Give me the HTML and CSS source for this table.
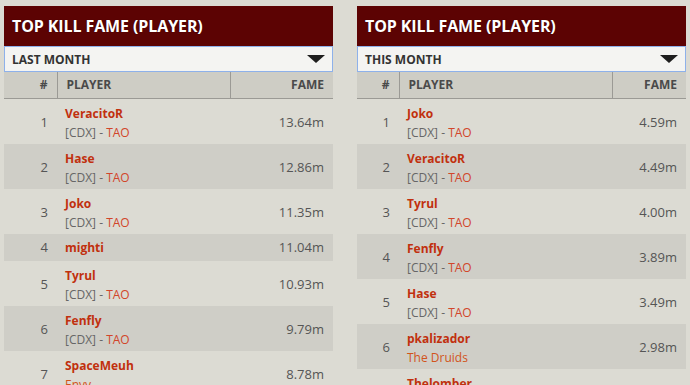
FILE: index.html
```html
<!DOCTYPE html>
<html>
<head>
<meta charset="utf-8">
<link rel="stylesheet" href="styles.css">
</head>
<body>
<div class="page">
  <section class="panel panel-a">
    <h2 class="title">TOP KILL FAME (PLAYER)</h2>
    <div class="select"><span>LAST MONTH</span><span class="caret"></span></div>
    <table class="board">
      <colgroup><col class="c-rank"><col class="c-player"><col class="c-fame"></colgroup>
      <thead><tr><th class="rank">#</th><th class="player">PLAYER</th><th class="fame">FAME</th></tr></thead>
      <tbody>
        <tr><td class="rank">1</td><td class="player"><div class="name">VeracitoR</div><div class="guild">[CDX] - <span class="ally">TAO</span></div></td><td class="fame">13.64m</td></tr>
        <tr class="alt"><td class="rank">2</td><td class="player"><div class="name">Hase</div><div class="guild">[CDX] - <span class="ally">TAO</span></div></td><td class="fame">12.86m</td></tr>
        <tr><td class="rank">3</td><td class="player"><div class="name">Joko</div><div class="guild">[CDX] - <span class="ally">TAO</span></div></td><td class="fame">11.35m</td></tr>
        <tr class="alt single"><td class="rank">4</td><td class="player"><div class="name">mighti</div></td><td class="fame">11.04m</td></tr>
        <tr><td class="rank">5</td><td class="player"><div class="name">Tyrul</div><div class="guild">[CDX] - <span class="ally">TAO</span></div></td><td class="fame">10.93m</td></tr>
        <tr class="alt"><td class="rank">6</td><td class="player"><div class="name">Fenfly</div><div class="guild">[CDX] - <span class="ally">TAO</span></div></td><td class="fame">9.79m</td></tr>
        <tr><td class="rank">7</td><td class="player"><div class="name">SpaceMeuh</div><div class="guild"><span class="gname">Envy</span></div></td><td class="fame">8.78m</td></tr>
      </tbody>
    </table>
  </section>
  <section class="panel panel-b">
    <h2 class="title">TOP KILL FAME (PLAYER)</h2>
    <div class="select"><span>THIS MONTH</span><span class="caret"></span></div>
    <table class="board">
      <colgroup><col class="c-rank"><col class="c-player"><col class="c-fame"></colgroup>
      <thead><tr><th class="rank">#</th><th class="player">PLAYER</th><th class="fame">FAME</th></tr></thead>
      <tbody>
        <tr><td class="rank">1</td><td class="player"><div class="name">Joko</div><div class="guild">[CDX] - <span class="ally">TAO</span></div></td><td class="fame">4.59m</td></tr>
        <tr class="alt"><td class="rank">2</td><td class="player"><div class="name">VeracitoR</div><div class="guild">[CDX] - <span class="ally">TAO</span></div></td><td class="fame">4.49m</td></tr>
        <tr><td class="rank">3</td><td class="player"><div class="name">Tyrul</div><div class="guild">[CDX] - <span class="ally">TAO</span></div></td><td class="fame">4.00m</td></tr>
        <tr class="alt"><td class="rank">4</td><td class="player"><div class="name">Fenfly</div><div class="guild">[CDX] - <span class="ally">TAO</span></div></td><td class="fame">3.89m</td></tr>
        <tr><td class="rank">5</td><td class="player"><div class="name">Hase</div><div class="guild">[CDX] - <span class="ally">TAO</span></div></td><td class="fame">3.49m</td></tr>
        <tr class="alt"><td class="rank">6</td><td class="player"><div class="name">pkalizador</div><div class="guild"><span class="gname">The Druids</span></div></td><td class="fame">2.98m</td></tr>
        <tr><td class="rank">7</td><td class="player"><div class="name">Thelomber</div><div class="guild"><span class="gname">Envy</span></div></td><td class="fame">2.71m</td></tr>
      </tbody>
    </table>
  </section>
</div>
</body>
</html>
```
FILE: styles.css
```css
html, body {
  margin: 0;
  padding: 0;
  background: #dcdbd3;
  font-family: "Open Sans", "Liberation Sans", sans-serif;
  overflow: hidden;
}
.page {
  display: flex;
  gap: 24px;
  padding: 6px 4px 0 4px;
  align-items: flex-start;
}
.panel {
  width: 329px;
  flex: 0 0 329px;
}
.title {
  margin: 0;
  height: 40px;
  line-height: 41px;
  padding: 0 8px;
  background: #5c0303;
  color: #fff;
  font-size: 16px;
  font-weight: 700;
  letter-spacing: -0.1px;
  text-shadow: 0 0 1px rgba(0,0,0,0.5);
}
.select {
  box-sizing: border-box;
  height: 26px;
  border: 1px solid #8eb1ea;
  background: #f4f4f2;
  display: flex;
  align-items: center;
  justify-content: space-between;
  padding: 0 7px 0 7px;
  font-size: 12px;
  font-weight: 700;
  color: #333;
}
.caret {
  width: 0;
  height: 0;
  border-left: 9px solid transparent;
  border-right: 9px solid transparent;
  border-top: 8px solid #1e1e1e;
}
.board {
  width: 100%;
  border-collapse: collapse;
  table-layout: fixed;
  font-size: 12px;
}
.panel-a .c-rank { width: 53px; }
.panel-a .c-fame { width: 103px; }
.panel-b .c-rank { width: 42px; }
.panel-b .c-fame { width: 74px; }
.board th {
  height: 26px;
  padding: 0 9px;
  background: #cecdc5;
  color: #4a4a4a;
  font-weight: 700;
  text-align: left;
  border-bottom: 1px solid #9b9a95;
  box-sizing: border-box;
}
.board th + th {
  border-left: 1px solid #9b9a95;
}
.board th.rank, .board th.fame { text-align: right; }
.board td {
  padding: 5px 9px 2px 9px;
  line-height: 19px;
  vertical-align: middle;
  color: #555;
}
.board tr.single td {
  padding-top: 4px;
  padding-bottom: 4px;
}
.board td.rank { text-align: right; font-size: 13px; }
.board td.player { padding-left: 8px; }
.board td.fame { text-align: right; font-size: 13px; }
.board tr.alt td { background: #cfcec7; }
.name {
  color: #c1300e;
  font-weight: 700;
}
.guild {
  color: #666;
}
.ally { color: #d2452a; }
.gname { color: #d2541b; }
```
